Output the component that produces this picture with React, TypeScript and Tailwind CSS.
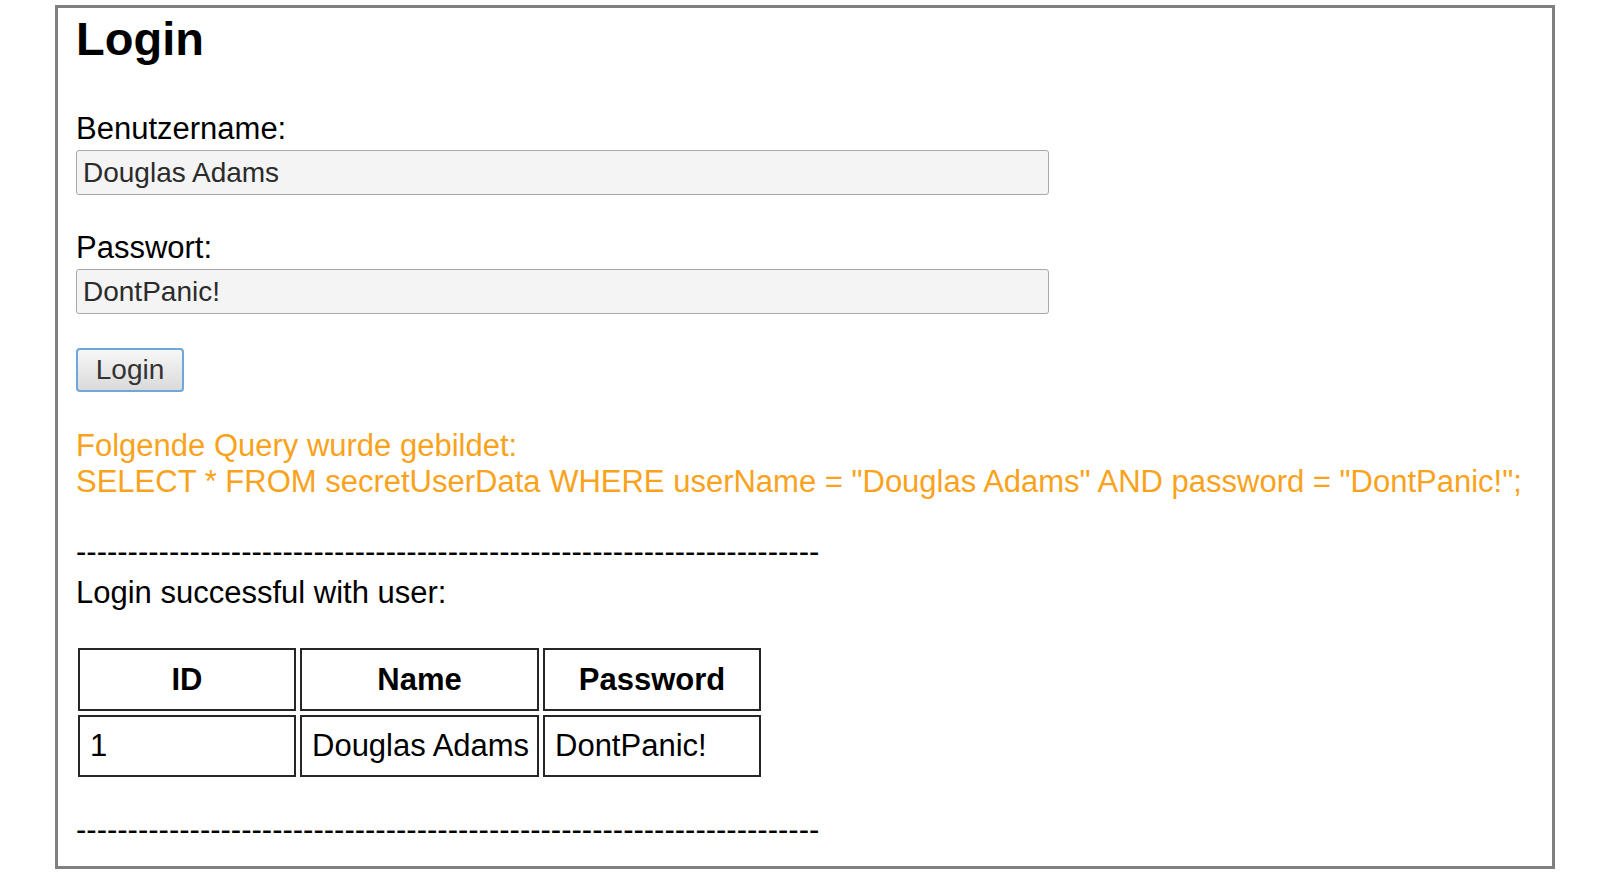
import React from 'react';

const DASHES = '-'.repeat(72);

const QUERY =
  'SELECT * FROM secretUserData WHERE userName = "Douglas Adams" AND password = "DontPanic!";';

const cell = 'border-2 border-[#262626]';

export default function App() {
  return (
    <div className="min-h-screen bg-white pt-[5px] pl-[55px] font-['Liberation_Sans',Arial,sans-serif] text-black">
      <div className="w-[1500px] h-[864px] border-[3px] border-[#808080] px-[18px] overflow-hidden">
        <h1 className="mt-[7px] text-[47px] leading-[47px] font-bold">Login</h1>

        <div className="mt-[49px] text-[31px] leading-[36px]">Benutzername:</div>
        <input
          readOnly
          value="Douglas Adams"
          className="mt-[3px] block w-[973px] h-[45px] rounded-[3px] border-[1.5px] border-[#a8a8a8] bg-[#f4f4f4] px-[6px] text-[28px] text-[#2b2b2b] outline-none"
        />

        <div className="mt-[35px] text-[31px] leading-[36px]">Passwort:</div>
        <input
          readOnly
          value="DontPanic!"
          className="mt-[3px] block w-[973px] h-[45px] rounded-[3px] border-[1.5px] border-[#a8a8a8] bg-[#f4f4f4] px-[6px] text-[28px] text-[#2b2b2b] outline-none"
        />

        <button className="mt-[34px] block w-[108px] h-[44px] rounded-[4px] border-2 border-[#6ea7d8] bg-linear-to-b from-[#f7f7f7] to-[#dadada] text-[28px] leading-[32px] text-[#333]">
          Login
        </button>

        <div className="mt-[36px] text-[31px] leading-[36px] text-[#f9a21c] whitespace-nowrap">
          <div>Folgende Query wurde gebildet:</div>
          <div>{QUERY}</div>
        </div>

        <div className="mt-[34px] text-[31px] leading-[36px]">{DASHES}</div>
        <div className="mt-[5px] text-[31px] leading-[36px]">Login successful with user:</div>

        <table className="mt-[33px] ml-[-2px] w-[691px] table-fixed border-separate border-spacing-x-[4px] border-spacing-y-[4px] text-[31px] leading-[36px]">
          <thead>
            <tr>
              <th className={`w-[218px] h-[63px] ${cell} text-center font-bold`}>ID</th>
              <th className={`w-[239px] h-[63px] ${cell} text-center font-bold`}>Name</th>
              <th className={`w-[218px] h-[63px] ${cell} text-center font-bold`}>Password</th>
            </tr>
          </thead>
          <tbody>
            <tr>
              <td className={`h-[62px] ${cell} pl-[10px] whitespace-nowrap`}>1</td>
              <td className={`h-[62px] ${cell} pl-[10px] whitespace-nowrap`}>Douglas Adams</td>
              <td className={`h-[62px] ${cell} pl-[10px] whitespace-nowrap`}>DontPanic!</td>
            </tr>
          </tbody>
        </table>

        <div className="mt-[31px] text-[31px] leading-[36px]">{DASHES}</div>
      </div>
    </div>
  );
}
